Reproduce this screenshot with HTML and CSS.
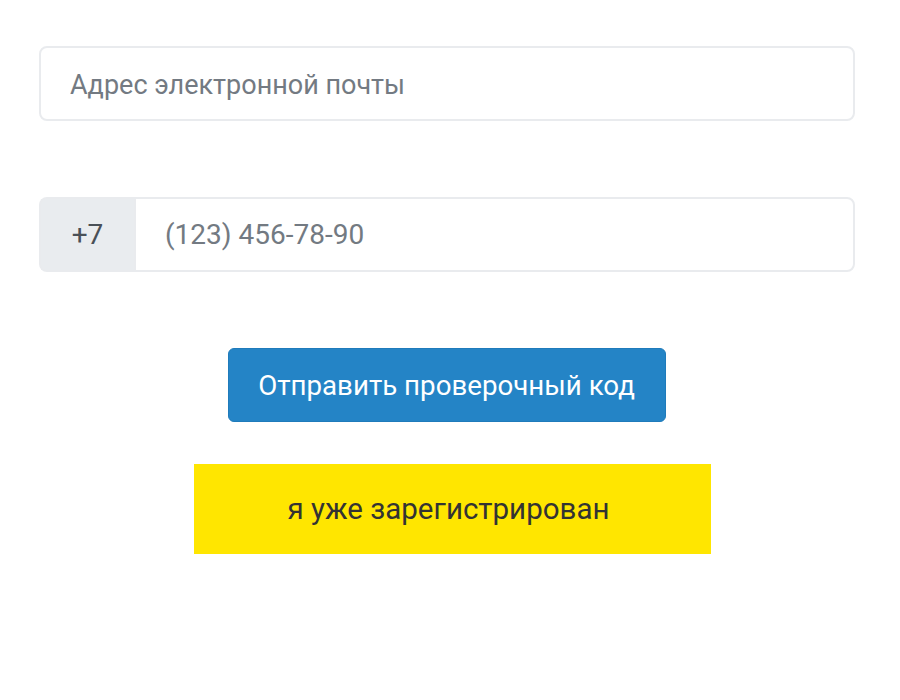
FILE: index.html
```html
<!DOCTYPE html>
<html lang="ru">
<head>
    <meta charset="UTF-8">
    <meta name="viewport" content="width=device-width, initial-scale=1.0">
    <title>Регистрация</title>
    <link rel="stylesheet" href="styles.css">
</head>
<body>
    <div class="register-form">
        <!-- Email -->
        <div class="form-group">
            <input type="email" class="form-control email-input" placeholder="Адрес электронной почты">
        </div>

        <!-- Phone -->
        <div class="form-group">
            <div class="input-group">
                <span class="input-prefix">+7</span>
                <input type="tel" class="form-control phone-input" placeholder="(123) 456-78-90">
            </div>
        </div>

        <div class="actions">
            <button class="send-button">Отправить проверочный код</button>
            <a href="#" class="login-link">я уже зарегистрирован</a>
        </div>
    </div>
</body>
</html>
```

FILE: styles.css
```css
* {
    margin: 0;
    padding: 0;
    box-sizing: border-box;
}

body {
    font-family: Roboto, Arial, sans-serif;
    background-color: #fff;
    padding: 46px 45px 0 39px;
}

.register-form {
    width: 816px;
}

.form-group {
    margin-bottom: 76px;
}

.form-control {
    display: block;
    width: 100%;
    height: 75px;
    padding: 0 29px;
    font-family: inherit;
    font-size: 28px;
    color: #495057;
    background-color: #fff;
    border: 2px solid #e9ebee;
    border-radius: 8px;
    outline: none;
}

.email-input {
    font-size: 27px;
    padding-top: 2px;
}

.form-control::placeholder {
    color: #737a82;
}

.input-group {
    display: flex;
    height: 75px;
}

.input-prefix {
    width: 95px;
    display: flex;
    align-items: center;
    justify-content: center;
    font-size: 28px;
    color: #495057;
    background-color: #e9ecef;
    border: 2px solid #e9ebee;
    border-right: none;
    border-radius: 8px 0 0 8px;
}

.phone-input {
    flex: 1;
    border-radius: 0 8px 8px 0;
}

.actions {
    display: flex;
    flex-direction: column;
    align-items: center;
}

.send-button {
    width: 438px;
    height: 74px;
    font-family: inherit;
    font-size: 27.7px;
    color: #fff;
    background-color: #2484c6;
    border: 1px solid #1f7bbb;
    border-radius: 6px;
    cursor: pointer;
    margin-left: -1px;
}

.login-link {
    display: flex;
    align-items: center;
    justify-content: center;
    width: 517px;
    height: 90px;
    margin-top: 42px;
    margin-left: 11px;
    padding-right: 8px;
    font-size: 29.5px;
    color: #333;
    text-decoration: none;
    background-color: #ffe600;
}
```
